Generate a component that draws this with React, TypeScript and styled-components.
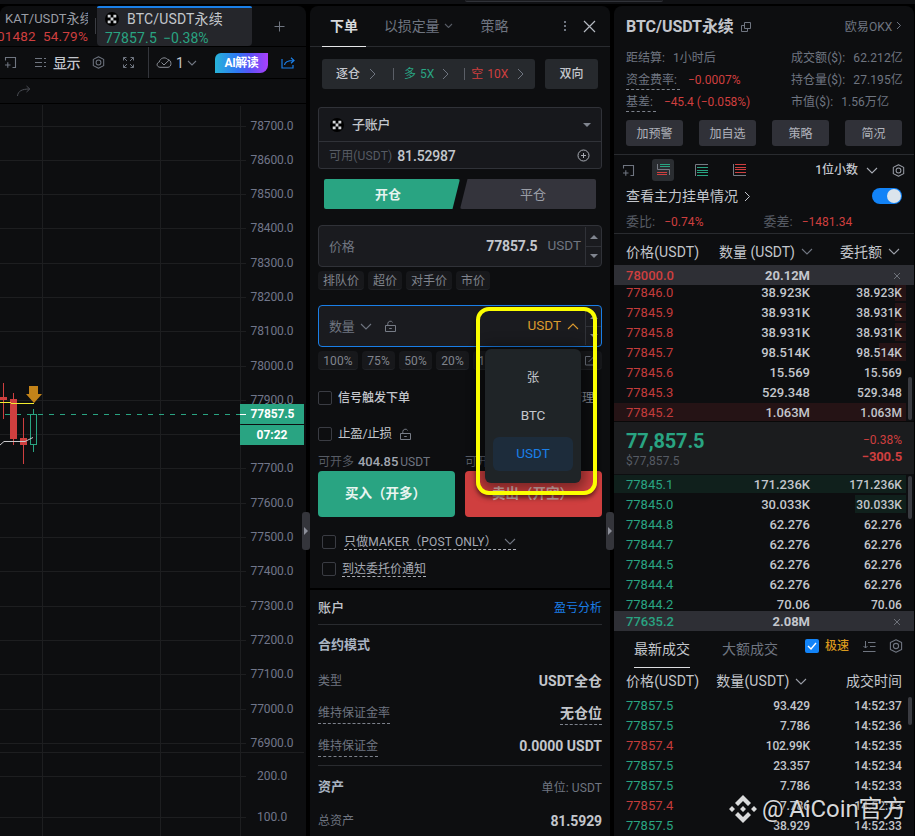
import React from "react";
import styled, { createGlobalStyle, css } from "styled-components";

const GREEN = "#29a482";
const RED = "#cf3f3f";
const LIGHT = "#c3c6cc";
const MUTED = "#6f7580";
const DIM = "#565b64";
const BLUE = "#1a7fe8";

const Global = createGlobalStyle`
  * { box-sizing: border-box; }
  html, body { margin: 0; background: #000; }
  body {
    width: 915px; height: 836px; overflow: hidden;
    font-family: Roboto, "Noto Sans CJK SC", sans-serif;
    font-size: 12px; color: ${LIGHT};
  }
  svg { display: block; flex: none; }
`;

const Screen = styled.div`
  position: relative;
  width: 915px;
  height: 836px;
  display: flex;
  flex-direction: column;
  overflow: hidden;
  background: #000;
`;
const TopStrip = styled.div`
  height: 4px;
  margin-bottom: 2px;
  background: #101114;
  display: flex;
  flex: none;
`;
const TopStripTab = styled.div`
  margin-left: 465px;
  width: 198px;
  height: 2px;
  background: #1b1c20;
  border-bottom: 1px solid #303238;
  border-radius: 0 0 3px 3px;
`;
const Main = styled.div`
  flex: 1;
  display: grid;
  grid-template-columns: 306px 300px 300px;
  column-gap: 4px;
  min-height: 0;
`;
const Panel = styled.section`
  background: #0d0e10;
  border-radius: 8px 8px 0 0;
  overflow: hidden;
  display: flex;
  flex-direction: column;
  position: relative;
  min-width: 0;
`;

const T = styled.span<{ $s?: number; $c?: string; $w?: number; $ls?: number }>`
  font-size: ${(p) => p.$s ?? 12}px;
  color: ${(p) => p.$c ?? LIGHT};
  font-weight: ${(p) => p.$w ?? 400};
  letter-spacing: ${(p) => p.$ls ?? 0}px;
  line-height: 1;
  white-space: nowrap;
`;
const Dashed = styled(T)`
  padding-bottom: 4px;
  border-bottom: 1px dashed #7d828c;
  margin-top: 5px;
`;
const Row = styled.div<{ $h: number; $gap?: number; $between?: boolean; $pad?: string }>`
  height: ${(p) => p.$h}px;
  flex: none;
  display: flex;
  align-items: center;
  gap: ${(p) => p.$gap ?? 0}px;
  padding: ${(p) => p.$pad ?? "0"};
  ${(p) => p.$between && css`justify-content: space-between;`}
`;
const Gap = styled.div<{ $h: number }>`
  height: ${(p) => p.$h}px;
  flex: none;
`;
const Push = styled.div<{ $w?: number }>`
  ${(p) => (p.$w ? css`width: ${p.$w}px; flex: none;` : css`flex: 1;`)}
`;
const Rule = styled.div<{ $c?: string; $h?: number }>`
  height: ${(p) => p.$h ?? 1}px;
  background: ${(p) => p.$c ?? "#292b2f"};
  flex: none;
`;

/* ---------- icons ---------- */
const Chevron = ({ dir = "down", w = 10, c = MUTED }: { dir?: "down" | "up" | "right"; w?: number; c?: string }) => {
  const h = w / 2;
  if (dir === "right")
    return (
      <svg width={h + 2} height={w + 2}>
        <path d={`M1 1L${h + 1} ${h + 1}L1 ${w + 1}`} fill="none" stroke={c} />
      </svg>
    );
  return (
    <svg width={w + 2} height={h + 2}>
      <path
        d={dir === "down" ? `M1 1L${h + 1} ${h + 1}L${w + 1} 1` : `M1 ${h + 1}L${h + 1} 1L${w + 1} ${h + 1}`}
        fill="none"
        stroke={c}
        strokeWidth="1.1"
      />
    </svg>
  );
};
const Triangle = ({ up, c = "#80858f", w = 8 }: { up?: boolean; c?: string; w?: number }) => (
  <svg width={w} height={w / 2}>
    <path d={up ? `M0 ${w / 2}L${w / 2} 0L${w} ${w / 2}Z` : `M0 0H${w}L${w / 2} ${w / 2}Z`} fill={c} />
  </svg>
);
const SideArrow = () => (
  <svg width="4" height="8"><path d="M0 0L4 4L0 8Z" fill="#8d909a" /></svg>
);
const OkxLogo = ({ s = 14 }: { s?: number }) => (
  <svg width={s} height={s} viewBox="0 0 14 14">
    <circle cx="7" cy="7" r="7" fill="#000" />
    <path d="M2.7 2.7h2.9v2.9h-2.9zM8.4 2.7h2.9v2.9h-2.9zM5.6 5.6h2.8v2.8h-2.8zM2.7 8.4h2.9v2.9h-2.9zM8.4 8.4h2.9v2.9h-2.9z" fill="#d3d5d8" />
  </svg>
);
const HexGear = ({ c = MUTED, s = 13 }: { c?: string; s?: number }) => (
  <svg width={s} height={s} viewBox="0 0 14 14" fill="none" stroke={c} strokeWidth="1.1">
    <path d="M7 .8L12.6 3.6V10.4L7 13.2L1.4 10.4V3.6Z" strokeLinejoin="round" />
    <circle cx="7" cy="7" r="2.6" />
  </svg>
);
const FramePlus = ({ c = MUTED }: { c?: string }) => (
  <svg width="13" height="13" fill="none" stroke={c} strokeWidth="1.1">
    <path d="M1.5 4.5V1.5H11.5V11.5H8.5M1 9H6.5M3.8 6.3V11.8" />
  </svg>
);
const Lock = () => (
  <svg width="13" height="13" fill="none" stroke="#777c86">
    <path d="M1.5 5.5H11.5V11.5H1.5ZM3.8 5.5V3.5A2.6 2.6 0 0 1 8.6 2.4M5.2 8.5H7.8" />
  </svg>
);

/* ---------- chart panel ---------- */
const TabsBar = styled.div`
  height: 40px;
  display: flex;
  flex: none;
`;
const SymbolTab = styled.div<{ $active?: boolean; $w: number }>`
  width: ${(p) => p.$w}px;
  padding-top: ${(p) => (p.$active ? 4 : 6)}px;
  display: flex;
  flex-direction: column;
  gap: ${(p) => (p.$active ? 5 : 4)}px;
  overflow: hidden;
  ${(p) =>
    p.$active &&
    css`
      background: #25262b;
      border-top: 2px solid ${BLUE};
      border-radius: 2px 2px 4px 4px;
      padding-left: 8px;
    `}
`;
const KatClip = styled.div`
  width: 88px;
  overflow: hidden;
  display: flex;
  flex-direction: column;
  gap: 4px;
`;
const KatName = styled.div`
  padding-left: 5px;
  display: flex;
`;
const KatPrice = styled.div`
  display: flex;
  justify-content: flex-end;
  padding-top: 1px;
`;
const TabDivider = styled.div`
  width: 1px;
  height: 16px;
  margin: 12px 1px 0 0;
  background: #3b3d43;
`;
const VBar = styled.div<{ $h: number; $c?: string }>`
  width: 1px;
  height: ${(p) => p.$h}px;
  background: ${(p) => p.$c ?? "#34363c"};
`;
const AiBadge = styled.div`
  width: 53px;
  height: 20px;
  display: flex;
  align-items: center;
  justify-content: center;
  border-radius: 6px 0 8px 0;
  background: linear-gradient(90deg, #27b3d8, #2f78f5 42%, #5a53f7 65%, #ab3ffc);
`;

const priceLabels: [string, number][] = [
  ["78700.0", 126], ["78600.0", 160], ["78500.0", 194], ["78400.0", 228], ["78300.0", 263],
  ["78200.0", 297], ["78100.0", 331], ["78000.0", 366], ["77900.0", 400], ["", 434], ["77700.0", 468],
  ["77600.0", 503], ["77500.0", 537], ["77400.0", 571], ["77300.0", 606], ["77200.0", 640],
  ["77100.0", 674], ["77000.0", 709], ["76900.0", 743],
];
const Tick = styled.text<{ $c?: string; $b?: boolean }>`
  font-family: Roboto, sans-serif;
  font-size: 12px;
  font-weight: ${(p) => (p.$b ? 700 : 400)};
  fill: ${(p) => p.$c ?? "#71768a"};
`;
const Chart = () => (
  <svg width="306" height="732" viewBox="0 104 306 732" shapeRendering="crispEdges">
    <path d="M42.5 105V836M160.5 105V836M240.5 106V836" stroke="#1d1e20" />
    {priceLabels.map(([t, y]) => (
      <React.Fragment key={y}>
        <path d={`M0 ${y + 0.5}H246`} stroke="#1d1e20" />
        <Tick x="250.5" y={y + 4} textLength={t ? 43 : undefined}>{t}</Tick>
      </React.Fragment>
    ))}
    <path d="M0 752.5H304M0 776.5H246M0 817.5H246" stroke="#1d1e20" />
    <Tick x="257" y="780">200.0</Tick>
    <Tick x="257" y="821">100.0</Tick>
    <path d="M5 414.5H240" stroke={GREEN} strokeDasharray="5 6" />
    <path d="M3.5 383V419M13.5 393V445M23.5 418V464" stroke={RED} />
    <path d="M0 397H7V400H0ZM10 399H17V439H10ZM20 438H27V445H20Z" fill={RED} />
    <path d="M33.5 409V414M33.5 444V452M30.5 414.5H36.5V444.5H30.5Z" stroke={GREEN} fill="none" />
    <path d="M0 402.5H10L12 403.5H34" stroke="#f2ec2e" fill="none" />
    <path d="M0 445L4 441.5H25L33 437.5" stroke="#c9c9cc" fill="none" shapeRendering="auto" />
    <path d="M29 386H38V394H42L34 403L26 394H29Z" fill="#c38319" shapeRendering="auto" />
    <path d="M240 404H304V424H240ZM240 425H304V445H240Z" fill={GREEN} />
    <path d="M240 414.5H246" stroke="#fff" />
    <Tick x="250.5" y="418" $c="#fff" $b textLength={44}>77857.5</Tick>
    <Tick x="256.5" y="439" $c="#fff" $b textLength={31}>07:22</Tick>
  </svg>
);

const ChartPanel = () => (
  <Panel>
    <TabsBar>
      <SymbolTab $w={95}>
        <KatClip>
          <KatName><T $s={13} $c="#9a9da5" $ls={0.05}>KAT/USDT永续</T></KatName>
          <KatPrice><T $s={13.5} $c={RED} $ls={0.2}>.01482&nbsp; 54.79%</T></KatPrice>
        </KatClip>
      </SymbolTab>
      <TabDivider />
      <SymbolTab $active $w={155}>
        <Row $h={14} $gap={8}><OkxLogo /><T $s={14} $ls={0.15}>BTC/USDT永续</T></Row>
        <Row $h={14} $gap={6}><T $s={14} $c={GREEN} $ls={0.15}>77857.5</T><T $s={14} $c={GREEN}>−0.38%</T></Row>
      </SymbolTab>
      <Push $w={22} />
      <svg width="11" height="40"><path d="M0.5 20.5H10.5M5.5 15.5V25.5" stroke={MUTED} /></svg>
    </TabsBar>
    <Rule $c="#000" />
    <Row $h={31}>
      <Push $w={4} />
      <FramePlus />
      <Push $w={18} />
      <svg width="11" height="11" stroke={MUTED} fill="none"><path d="M0 1.5H7M0 5.5H7M0 9.5H7M9 1.5H11M9 5.5H11M9 9.5H11" /></svg>
      <Push $w={7} />
      <T $s={14} $w={500} $ls={-0.5}>显示</T>
      <Push $w={12} />
      <HexGear />
      <Push $w={18} />
      <svg width="11" height="11" stroke={MUTED} fill="none"><path d="M.5 3.5V.5H3.5M.5.5L4 4M7.5.5H10.5V3.5M10.5.5L7 4M.5 7.5V10.5H3.5M.5 10.5L4 7M7.5 10.5H10.5V7.5M10.5 10.5L7 7" /></svg>
      <Push $w={14} />
      <VBar $h={31} />
      <Push $w={7} />
      <svg width="16" height="13" stroke="#8a8e96" fill="none"><path d="M4 11.3C.5 11 0 7 3.3 6C4 2 9 .5 11.5 3.3C16 4 16 11 12 11.3ZM5.5 6.5L8 9L13 4.2" /></svg>
      <Push $w={4} />
      <T $s={14}>1</T>
      <Push $w={3} />
      <Chevron w={8} />
      <Push $w={18} />
      <AiBadge><T $s={12} $w={700} $c="#fff" $ls={-0.5}>AI解读</T></AiBadge>
      <Push $w={13} />
      <svg width="15" height="12" stroke={BLUE} fill="none" strokeWidth="1.2"><path d="M1 2V11H12V8M3.5 8C4 4.5 7 3.5 12.5 3.5M10 .8L13 3.5L10 6.2" /></svg>
    </Row>
    <Rule $c="#000" />
    <Row $h={24} $pad="0 0 0 17px">
      <svg width="14" height="12" stroke="#4b4e55" fill="none"><path d="M.5 11C1 6 5 4 12.5 4M9.5 1L12.8 4L9.5 7" /></svg>
    </Row>
    <Rule $c="#000" />
    <Chart />
  </Panel>
);

/* ---------- order panel ---------- */
const OrderTabs = styled.div`
  height: 41px;
  flex: none;
  display: flex;
  align-items: center;
  padding: 0 14px 0 12px;
  border-bottom: 1px solid #292b2f;
`;
const OrderTab = styled.div<{ $active?: boolean }>`
  height: 41px;
  display: flex;
  align-items: center;
  justify-content: center;
  gap: 5px;
  padding: 0 8px;
  border-bottom: 1px solid ${(p) => (p.$active ? "#e5e6e8" : "transparent")};
`;
const Content = styled.div`
  padding: 0 8px;
  display: flex;
  flex-direction: column;
`;
const LeverGroup = styled.div`
  width: 213px;
  height: 30px;
  display: flex;
  align-items: center;
  padding-left: 14px;
  background: #26292d;
  border-radius: 3px;
`;
const ModeButton = styled.div`
  width: 53px;
  height: 30px;
  display: flex;
  align-items: center;
  justify-content: center;
  background: #26292d;
  border-radius: 3px;
`;
const Account = styled.div`
  border: 1px solid #303238;
  border-radius: 3px;
  background: #17181c;
  height: 62px;
`;
const Sides = styled.div`
  display: grid;
  grid-template-columns: 136px 136px;
  height: 30px;
  margin: 10px 6px 16px;
`;
const Side = styled.div<{ $buy?: boolean }>`
  display: flex;
  align-items: center;
  justify-content: center;
  padding: ${(p) => (p.$buy ? "0 8px 0 0" : "0 0 0 10px")};
  border-radius: 2px;
  background: ${(p) => (p.$buy ? GREEN : "#34343c")};
  clip-path: ${(p) => (p.$buy ? "polygon(0 0, 100% 0, 94.5% 100%, 0 100%)" : "polygon(5.5% 0, 100% 0, 100% 100%, 0 100%)")};
`;
const Field = styled.div<{ $focus?: boolean }>`
  height: 42px;
  flex: none;
  display: flex;
  align-items: center;
  padding-left: 10px;
  background: #1a1b1f;
  border: 1px solid ${(p) => (p.$focus ? BLUE : "#303238")};
  border-radius: 4px;
`;
const Stepper = styled.div`
  width: 16px;
  height: 38px;
  margin-left: 4px;
  border-left: 1px solid #303238;
  display: grid;
  grid-template-rows: 1fr 1fr;
`;
const Step = styled.div`
  display: flex;
  align-items: center;
  justify-content: center;
  & + & { border-top: 1px solid #303238; }
`;
const Chips = styled.div`
  display: flex;
  gap: 4px;
  margin-top: 4px;
  height: 19px;
`;
const Chip = styled.div<{ $w: number }>`
  width: ${(p) => p.$w}px;
  height: 19px;
  flex: none;
  display: flex;
  align-items: center;
  justify-content: center;
  padding-top: 1px;
  background: #17181b;
  border-radius: 4px;
  border-bottom: 1px solid #202226;
`;
const Box = styled.div`
  width: 14px;
  height: 14px;
  flex: none;
  border: 1px solid #3a3c43;
  border-radius: 2px;
`;
const Submit = styled.div<{ $buy?: boolean }>`
  width: 137px;
  height: 46px;
  border-radius: 4px;
  display: flex;
  align-items: center;
  padding-left: 27px;
  background: ${(p) => (p.$buy ? GREEN : "#cf3f3f")};
`;
const PostOnly = styled.div`
  display: flex;
  align-items: center;
  justify-content: space-between;
  width: 172px;
  height: 16px;
  border-bottom: 1px dashed #aaaeb6;
`;
const Notify = styled(PostOnly)`
  width: 84px;
`;
const Highlight = styled.div`
  position: absolute;
  left: 476px;
  top: 307px;
  width: 121px;
  height: 188px;
  border: 4px solid #fbff00;
  border-radius: 13px;
  box-shadow: 0 3px 4px rgba(0, 0, 0, 0.5);
`;
const Menu = styled.div`
  position: absolute;
  left: 485px;
  top: 349px;
  width: 96px;
  height: 134px;
  padding: 10px 8px;
  border-radius: 6px;
  background: #1f2427;
  box-shadow: 0 2px 14px 5px rgba(0, 0, 0, 0.42);
  display: flex;
  flex-direction: column;
  gap: 0;
`;
const MenuItem = styled.div<{ $on?: boolean }>`
  height: 38px;
  display: flex;
  align-items: center;
  justify-content: center;
  border-radius: 6px;
  ${(p) => p.$on && css`height: 34px; margin-top: 2px; background: #1d2c3b;`}
`;
const Handle = styled.div<{ $x: number }>`
  position: absolute;
  left: ${(p) => p.$x}px;
  top: 512px;
  width: 8px;
  height: 38px;
  background: #34353b;
  border-radius: 3px;
  display: flex;
  align-items: center;
  justify-content: center;
`;

const Steps = () => (
  <Stepper>
    <Step><Triangle up /></Step>
    <Step><Triangle /></Step>
  </Stepper>
);

const OrderPanel = () => (
  <Panel>
    <OrderTabs>
      <OrderTab $active><T $s={14} $w={700} $c="#d7d9dc">下单</T></OrderTab>
      <Push $w={10} />
      <OrderTab><T $s={14} $c={MUTED} $ls={-0.15}>以损定量</T><Chevron w={7} c={DIM} /></OrderTab>
      <Push $w={11} />
      <OrderTab><T $s={14} $c={MUTED}>策略</T></OrderTab>
      <Push />
      <svg width="3" height="12" fill={MUTED}><path d="M0 1H2V3H0ZM0 5H2V7H0ZM0 9H2V11H0Z" /></svg>
      <Push $w={16} />
      <svg width="13" height="13" stroke="#b4b8c0" strokeWidth="1.2"><path d="M1 1L12 12M12 1L1 12" /></svg>
    </OrderTabs>
    <Content>
      <Gap $h={12} />
      <Row $h={30} $pad="0 4px" $between>
        <LeverGroup>
          <T $s={12} $w={500}>逐仓</T><Push $w={9} /><Chevron dir="right" w={10} /><Push $w={17} />
          <VBar $h={12} $c="#5b5f67" /><Push $w={10} />
          <T $c={GREEN}>多</T><Push $w={4} /><T $c={GREEN}>5X</T><Push $w={8} /><Chevron dir="right" w={10} /><Push $w={15} />
          <VBar $h={12} $c="#5b5f67" /><Push $w={6} />
          <T $c={RED}>空</T><Push $w={4} /><T $c={RED}>10X</T><Push $w={9} /><Chevron dir="right" w={10} />
        </LeverGroup>
        <ModeButton><T $w={500}>双向</T></ModeButton>
      </Row>
      <Gap $h={18} />
      <Account>
        <Row $h={33} $pad="0 10px 0 11px" $gap={8}>
          <OkxLogo /><T $s={13} $w={500} $ls={-0.3}>子账户</T><Push /><Triangle />
        </Row>
        <Rule $c="#303238" />
        <Row $h={27} $pad="0 11px 0 10px">
          <T $c={DIM} $ls={0.15}>可用(USDT)</T><Push $w={5} />
          <T $s={14} $w={500} $ls={-0.15}>81.52987</T><Push />
          <svg width="13" height="13" fill="none" stroke="#a8acb4"><circle cx="6.5" cy="6.5" r="5.5" /><path d="M4 6.5H9M6.5 4V9" /></svg>
        </Row>
      </Account>
      <Sides>
        <Side $buy><T $s={13} $w={700} $c="#e6f3ef">开仓</T></Side>
        <Side><T $s={13} $c="#9a9da6">平仓</T></Side>
      </Sides>
      <Field>
        <T $s={13} $c={MUTED} $ls={-0.3}>价格</T><Push />
        <T $s={14} $w={700} $ls={-0.15}>77857.5</T><Push $w={10} />
        <T $s={13.5} $c={MUTED}>USDT</T><Steps />
      </Field>
      <Chips>
        {[["排队价", 46], ["超价", 34], ["对手价", 46], ["市价", 34]].map(([t, w]) => (
          <Chip key={t} $w={w as number}><T $c="#80848d">{t}</T></Chip>
        ))}
      </Chips>
      <Gap $h={15} />
      <Field $focus>
        <T $s={13} $c={MUTED} $ls={-0.3}>数量</T><Push $w={6} /><Chevron w={10} /><Push $w={12} /><Lock /><Push />
        <T $s={13.5} $c="#dc9a2e">USDT</T><Push $w={6} /><Chevron dir="up" w={10} c="#dc9a2e" /><Push $w={2} /><Steps />
      </Field>
      <Chips>
        {[["100%", 40], ["75%", 33], ["50%", 33], ["20%", 33], ["10%", 33]].map(([t, w]) => (
          <Chip key={t} $w={w as number}><T $c="#80848d" $ls={0.15}>{t}</T></Chip>
        ))}
        <Push />
        <Chip $w={25}><svg width="11" height="11" fill="none" stroke={MUTED}><path d="M6.5 1.5H1.5V10H9.5V5.5M4.5 7L10 1.5" /></svg></Chip>
      </Chips>
      <Gap $h={18} />
      <Row $h={20} $pad="0 8px 0 0"><Box /><Push $w={6} /><T $w={500}>信号触发下单</T><Push /><T $c="#8b8f98">管理</T></Row>
      <Gap $h={16} />
      <Row $h={20}><Box /><Push $w={6} /><T $s={12.5} $ls={-0.3}>止盈/止损</T><Push $w={7} /><Lock /></Row>
      <Gap $h={8} />
      <Row $h={19}>
        <T $c={DIM}>可开多</T><Push $w={4} /><T $s={13} $w={500} $c="#a2a7b0" $ls={-0.05}>404.85</T><Push $w={2} /><T $c={MUTED}>USDT</T>
        <Push $w={35} /><T $c={DIM}>可开空</T>
      </Row>
      <Row $h={46} $between>
        <Submit $buy><T $s={13.5} $w={700} $c="#e9f5f1">买入（开多）</T></Submit>
        <Submit><T $s={13.5} $w={700} $c="#dfb4b2">卖出（开空）</T></Submit>
      </Row>
      <Gap $h={17} />
      <Row $h={16} $pad="0 0 0 4px" $gap={8}><Box /><PostOnly><T $s={12} $c="#a7abb5" $ls={0.15}>只做MAKER（POST ONLY）</T><Chevron w={10} /></PostOnly></Row>
      <Gap $h={11} />
      <Row $h={16} $pad="0 0 0 4px" $gap={6}><Box /><Notify><T $c="#a7abb5">到达委托价通知</T></Notify></Row>
    </Content>
    <Gap $h={11} />
    <Rule $c="#000" $h={2} />
    <Content>
      <Row $h={34} $pad="1px 0 0" $between><T $s={13} $w={500} $ls={0.3}>账户</T><T $c={BLUE}>盈亏分析</T></Row>
      <Rule />
      <Row $h={38} $between><T $s={13} $w={700} $c="#a9b4c2">合约模式</T></Row>
      <Row $h={34} $pad="1px 0 0" $between><T $c={MUTED}>类型</T><T $s={14} $w={700}>USDT全仓</T></Row>
      <Row $h={32} $between><Dashed $c={MUTED}>维持保证金率</Dashed><Dashed $s={14} $w={700}>无仓位</Dashed></Row>
      <Row $h={34} $between><Dashed $c={MUTED}>维持保证金</Dashed><T $s={14} $w={700}>0.0000 USDT</T></Row>
      <Gap $h={2} />
      <Rule />
      <Row $h={41} $between><T $s={13} $w={700} $c="#a9b4c2">资产</T><TotalUnit $c={MUTED} $ls={0.1}>单位: USDT</TotalUnit></Row>
      <Row $h={28} $between><T $c={MUTED}>总资产</T><T $s={14} $w={700} $ls={-0.1}>81.5929</T></Row>
    </Content>
  </Panel>
);
const TotalUnit = styled(T)`
  padding-top: 2px;
`;

/* ---------- order book panel ---------- */
const Info = styled.div`
  display: grid;
  grid-template-columns: 165px 1fr;
  grid-auto-rows: 22px;
  padding: 0 12px;
  align-items: center;
`;
const InfoCell = styled.div<{ $gap?: number }>`
  display: flex;
  align-items: center;
  gap: ${(p) => p.$gap ?? 8}px;
`;
const InfoKey = styled(T)`
  border-bottom: 1px dashed #7d828c;
  padding: 4px 3px 3px 0;
`;
const Actions = styled.div`
  display: grid;
  grid-template-columns: repeat(4, 57px);
  justify-content: space-between;
  padding: 0 12px;
  height: 26px;
`;
const Action = styled.div`
  display: flex;
  align-items: center;
  justify-content: center;
  background: #303138;
  border-radius: 3px;
  padding-top: 1px;
`;
const ViewIcon = styled.div<{ $on?: boolean }>`
  width: 22px;
  height: 22px;
  display: flex;
  align-items: center;
  justify-content: center;
  border-radius: 3px;
  background: ${(p) => (p.$on ? "#2a2d31" : "transparent")};
`;
const Toggle = styled.div`
  width: 30px;
  height: 16px;
  padding: 1px;
  border-radius: 8px;
  background: #1283f7;
  display: flex;
  justify-content: flex-end;
`;
const Knob = styled.div`
  width: 14px;
  height: 14px;
  border-radius: 7px;
  background: #dbe4ec;
`;
const Book = styled.div<{ $h: number }>`
  height: ${(p) => p.$h}px;
  flex: none;
  display: flex;
  flex-direction: column;
  overflow: hidden;
  position: relative;
`;
const Line = styled.div<{ $bar?: number; $tint?: string }>`
  height: 18px;
  margin-bottom: 2px;
  flex: none;
  margin-right: 8px;
  padding-left: 12px;
  display: grid;
  grid-template-columns: 84px 100px 92px;
  align-items: center;
  background: linear-gradient(${(p) => p.$tint ?? "transparent"}, ${(p) => p.$tint ?? "transparent"}) right / ${(p) => p.$bar ?? 0}px 100% no-repeat;
`;
const Right = styled(T)<{ $drop?: boolean }>`
  text-align: right;
  padding-top: ${(p) => (p.$drop ? 1 : 0)}px;
`;
const Pinned = styled.div`
  height: 20px;
  flex: none;
  background: #2e2f35;
  padding: 1px 0 0 12px;
  display: grid;
  grid-template-columns: 84px 100px 92px;
  align-items: center;
`;
const Scroll = styled.div<{ $top: number; $h: number }>`
  position: absolute;
  right: 2px;
  top: ${(p) => p.$top}px;
  width: 4px;
  height: ${(p) => p.$h}px;
  border-radius: 2px;
  background: #3a3b41;
`;
const Last = styled.div`
  height: 53px;
  flex: none;
  background: #1b1c1e;
  border-top: 1px solid #090909;
  display: flex;
  justify-content: space-between;
  padding: 9px 12px 0;
`;
const Stack = styled.div<{ $end?: boolean; $gap: number }>`
  display: flex;
  flex-direction: column;
  gap: ${(p) => p.$gap}px;
  ${(p) => p.$end && css`align-items: flex-end; padding-top: 3px;`}
`;
const AskShift = styled.div`
  margin-top: -2px;
  display: flex;
  flex-direction: column;
`;
const TradeTab = styled.div<{ $on?: boolean }>`
  height: 36px;
  display: flex;
  align-items: center;
  border-bottom: 1px solid ${(p) => (p.$on ? "#dcdde0" : "transparent")};
`;
const TopTools = styled.div`
  display: flex;
  align-items: center;
  height: 28px;
  align-self: flex-start;
`;
const Check = styled.div`
  width: 14px;
  height: 14px;
  border-radius: 2px;
  background: #1283f7;
`;
const Cross = styled.div`
  display: flex;
  justify-content: flex-end;
  padding-right: 1px;
`;
const VenueLink = styled.div`
  display: flex;
  gap: 3px;
  padding-top: 1px;
`;
const Watermark = styled.div`
  position: absolute;
  left: 729px;
  top: 794px;
  display: flex;
  align-items: center;
  gap: 5px;
  height: 30px;
  text-shadow: 1px 1px 2px rgba(0, 0, 0, 0.8);
`;

const asks: [string, string, number][] = [
  ["77846.0", "38.923K", 11], ["77845.9", "38.931K", 11], ["77845.8", "38.931K", 11], ["77845.7", "98.514K", 27],
  ["77845.6", "15.569", 0], ["77845.3", "529.348", 0], ["77845.2", "1.063M", 292],
];
const bids: [string, string, number][] = [
  ["77845.1", "171.236K", 292], ["77845.0", "30.033K", 51], ["77844.8", "62.276", 0], ["77844.7", "62.276", 0],
  ["77844.5", "62.276", 0], ["77844.4", "62.276", 0], ["77844.2", "70.06", 0],
];
const trades: [string, string, string][] = [
  ["77857.5", "93.429", "37"], ["77857.5", "7.786", "36"], ["77857.4", "102.99K", "35"], ["77857.5", "23.357", "34"],
  ["77857.5", "7.786", "33"], ["77857.4", "7.786", "33"], ["77857.5", "38.929", "33"],
];
const BookLine = ({ row, color, tint }: { row: [string, string, number]; color: string; tint: string }) => (
  <Line $bar={row[2]} $tint={tint}>
    <T $s={13} $c={color}>{row[0]}</T>
    <Right $s={13} $w={500}>{row[1]}</Right>
    <Right $s={12} $w={500} $ls={0.1} $drop>{row[1]}</Right>
  </Line>
);
const PinnedRow = ({ p, q, c }: { p: string; q: string; c: string }) => (
  <Pinned>
    <T $s={13} $w={500} $c={c}>{p}</T>
    <Right $s={13} $w={700}>{q}</Right>
    <Cross><svg width="8" height="8" stroke="#6d7179"><path d="M1 1L7 7M7 1L1 7" /></svg></Cross>
  </Pinned>
);

const BookPanel = () => (
  <Panel>
    <Row $h={41} $pad="0 13px 0 12px">
      <T $s={16} $w={700} $ls={-0.05}>BTC/USDT永续</T><Push $w={7} />
      <svg width="10" height="10" fill="none" stroke={MUTED}><path d="M3.5.5H9.5V6.5H3.5ZM3 3.5H.5V9.5H6.5V7" /></svg>
      <Push /><VenueLink><T $c={MUTED} $ls={0.1}>欧易OKX</T><Chevron dir="right" w={7} /></VenueLink>
    </Row>
    <Info>
      <InfoCell><T $c={MUTED}>距结算:</T><T $c={MUTED}>1小时后</T></InfoCell>
      <InfoCell $gap={8}><T $c={MUTED} $ls={0.05}>成交额($):</T><T $c={MUTED} $ls={0.1}>62.212亿</T></InfoCell>
      <InfoCell><InfoKey $c={MUTED}>资金费率:</InfoKey><T $c={RED}>−0.0007%</T></InfoCell>
      <InfoCell $gap={8}><T $c={MUTED} $ls={0.05}>持仓量($):</T><T $c={MUTED} $ls={0.1}>27.195亿</T></InfoCell>
      <InfoCell><InfoKey $c={MUTED}>基差:</InfoKey><T $c={RED} $ls={-0.08}>−45.4 (−0.058%)</T></InfoCell>
      <InfoCell $gap={8}><T $c={MUTED} $ls={0.05}>市值($):</T><T $c={MUTED} $ls={0.05}>1.56万亿</T></InfoCell>
    </Info>
    <Gap $h={7} />
    <Actions>
      {["加预警", "加自选", "策略", "简况"].map((t) => <Action key={t}><T $c="#b0b3bc">{t}</T></Action>)}
    </Actions>
    <Gap $h={8} />
    <Rule />
    <Row $h={30} $pad="0 9px 0 8px">
      <FramePlus /><Push $w={17} />
      <ViewIcon $on><svg width="14" height="14" fill="none"><path d="M1.5 1V6.5H13.5V12" stroke="#777b84" /><path d="M4 1.5H14M4 3.5H14" stroke={GREEN} /><path d="M1 9.5H11M1 11.5H11" stroke={RED} /></svg></ViewIcon>
      <Push $w={16} />
      <ViewIcon><svg width="14" height="14" fill="none"><path d="M1.5 13V1.5H14" stroke="#777b84" /><path d="M3 4.5H14M3 7.5H14M3 9.5H14M3 12.5H14" stroke={GREEN} /></svg></ViewIcon>
      <Push $w={16} />
      <ViewIcon><svg width="14" height="14" fill="none"><path d="M1.5 1V12.5H14" stroke="#777b84" /><path d="M3 1.5H14M3 4.5H14M3 6.5H14M3 9.5H14" stroke={RED} /></svg></ViewIcon>
      <Push /><T $w={500}>1位小数</T><Push $w={8} /><Chevron w={10} c="#a7abb3" /><Push $w={14} /><HexGear c="#9a9ea7" />
    </Row>
    <Row $h={22} $pad="0 12px"><T $s={14}>查看主力挂单情况</T><Push $w={6} /><Chevron dir="right" w={9} c={LIGHT} /><Push /><Toggle><Knob /></Toggle></Row>
    <Row $h={26} $pad="3px 12px 0"><T $s={13} $c={DIM}>委比:</T><Push $w={9} /><T $c={RED} $ls={0.05}>−0.74%</T><Push $w={60} /><T $s={13} $c={DIM}>委差:</T><Push $w={9} /><T $c={RED}>−1481.34</T></Row>
    <Rule />
    <Row $h={31} $pad="4px 14px 0 12px"><T $s={14} $ls={0.1}>价格(USDT)</T><Push /><T $s={14}>数量 (USDT)</T><Push $w={6} /><Chevron w={10} /><Push $w={27} /><T $s={14}>委托额</T><Push $w={6} /><Chevron w={10} c="#9a9ea7" /></Row>
    <PinnedRow p="78000.0" q="20.12M" c={RED} />
    <Book $h={136}>
      <AskShift>{asks.map((r) => <BookLine key={r[0]} row={r} color="#c33c3c" tint="#251315" />)}</AskShift>
      <Scroll $top={92} $h={43} />
    </Book>
    <Last>
      <Stack $gap={4}><T $s={20} $w={700} $c={GREEN} $ls={-0.15}>77,857.5</T><T $c={DIM} $ls={0.1}>$77,857.5</T></Stack>
      <Stack $end $gap={4}><T $c={RED}>−0.38%</T><T $s={13} $w={700} $c={RED} $ls={-0.1}>−300.5</T></Stack>
    </Last>
    <Gap $h={1} />
    <Book $h={136}>
      {bids.map((r) => <BookLine key={r[0]} row={r} color={GREEN} tint="#10201c" />)}
      <Scroll $top={1} $h={43} />
    </Book>
    <PinnedRow p="77635.2" q="2.08M" c={GREEN} />
    <Row $h={36} $pad="1px 11px 0 20px">
      <TradeTab $on><T $s={14}>最新成交</T></TradeTab><Push $w={32} />
      <TradeTab><T $s={14} $c={MUTED}>大额成交</T></TradeTab><Push />
      <TopTools>
        <Check><svg width="14" height="14" fill="none" stroke="#fff" strokeWidth="1.4"><path d="M3 7L6 10L11 4" /></svg></Check>
        <Push $w={6} /><T $c="#d99a1d" $w={500}>极速</T><Push $w={14} />
        <svg width="13" height="13" fill="none" stroke={MUTED}><path d="M5 2.5H12.5M7 6.5H12.5M0 11.5H12.5M2.5 1V8M.5 6L2.5 8L4.5 6" /></svg>
        <Push $w={13} /><HexGear s={14} />
      </TopTools>
    </Row>
    <Row $h={27} $pad="1px 12px 0"><T $s={14} $ls={0.1}>价格(USDT)</T><Push $w={17} /><T $s={14} $ls={0.1}>数量(USDT)</T><Push $w={6} /><Chevron w={10} c="#9a9ea7" /><Push /><T $s={14}>成交时间</T></Row>
    <Book $h={141}>
      <Gap $h={2} />
      {trades.map((r, i) => (
        <Line key={i}>
          <T $s={13} $c={r[0].endsWith("5") ? GREEN : "#c33c3c"}>{r[0]}</T>
          <Right $s={12} $w={500} $ls={-0.1} $drop>{r[1]}</Right>
          <Right $s={12} $w={500} $ls={0.05} $drop>14:52:{r[2]}</Right>
        </Line>
      ))}
      <Scroll $top={3} $h={28} />
    </Book>
  </Panel>
);

export default function App() {
  return (
    <Screen>
      <Global />
      <TopStrip><TopStripTab /></TopStrip>
      <Main>
        <ChartPanel />
        <OrderPanel />
        <BookPanel />
      </Main>
      <Handle $x={302}><SideArrow /></Handle>
      <Handle $x={606}><SideArrow /></Handle>
      <Menu>
        <MenuItem><T $s={12.5}>张</T></MenuItem>
        <MenuItem><T $s={13.5} $ls={-0.1}>BTC</T></MenuItem>
        <MenuItem $on><T $s={13.5} $c={BLUE}>USDT</T></MenuItem>
      </Menu>
      <Highlight />
      <Watermark>
        <svg width="28" height="28" viewBox="0 0 28 28" fill="#d9dadb">
          <path d="M14 0L22 8L19 11L14 6L9 11L6 8ZM14 28L22 20L19 17L14 22L9 17L6 20ZM0 14L3 11L6 14L3 17ZM22 14L25 11L28 14L25 17ZM11 14L14 11L17 14L14 17Z" />
        </svg>
        <T $s={24} $c="#d6d7d9" $ls={-0.1}>@ AiCoin官方</T>
      </Watermark>
    </Screen>
  );
}
